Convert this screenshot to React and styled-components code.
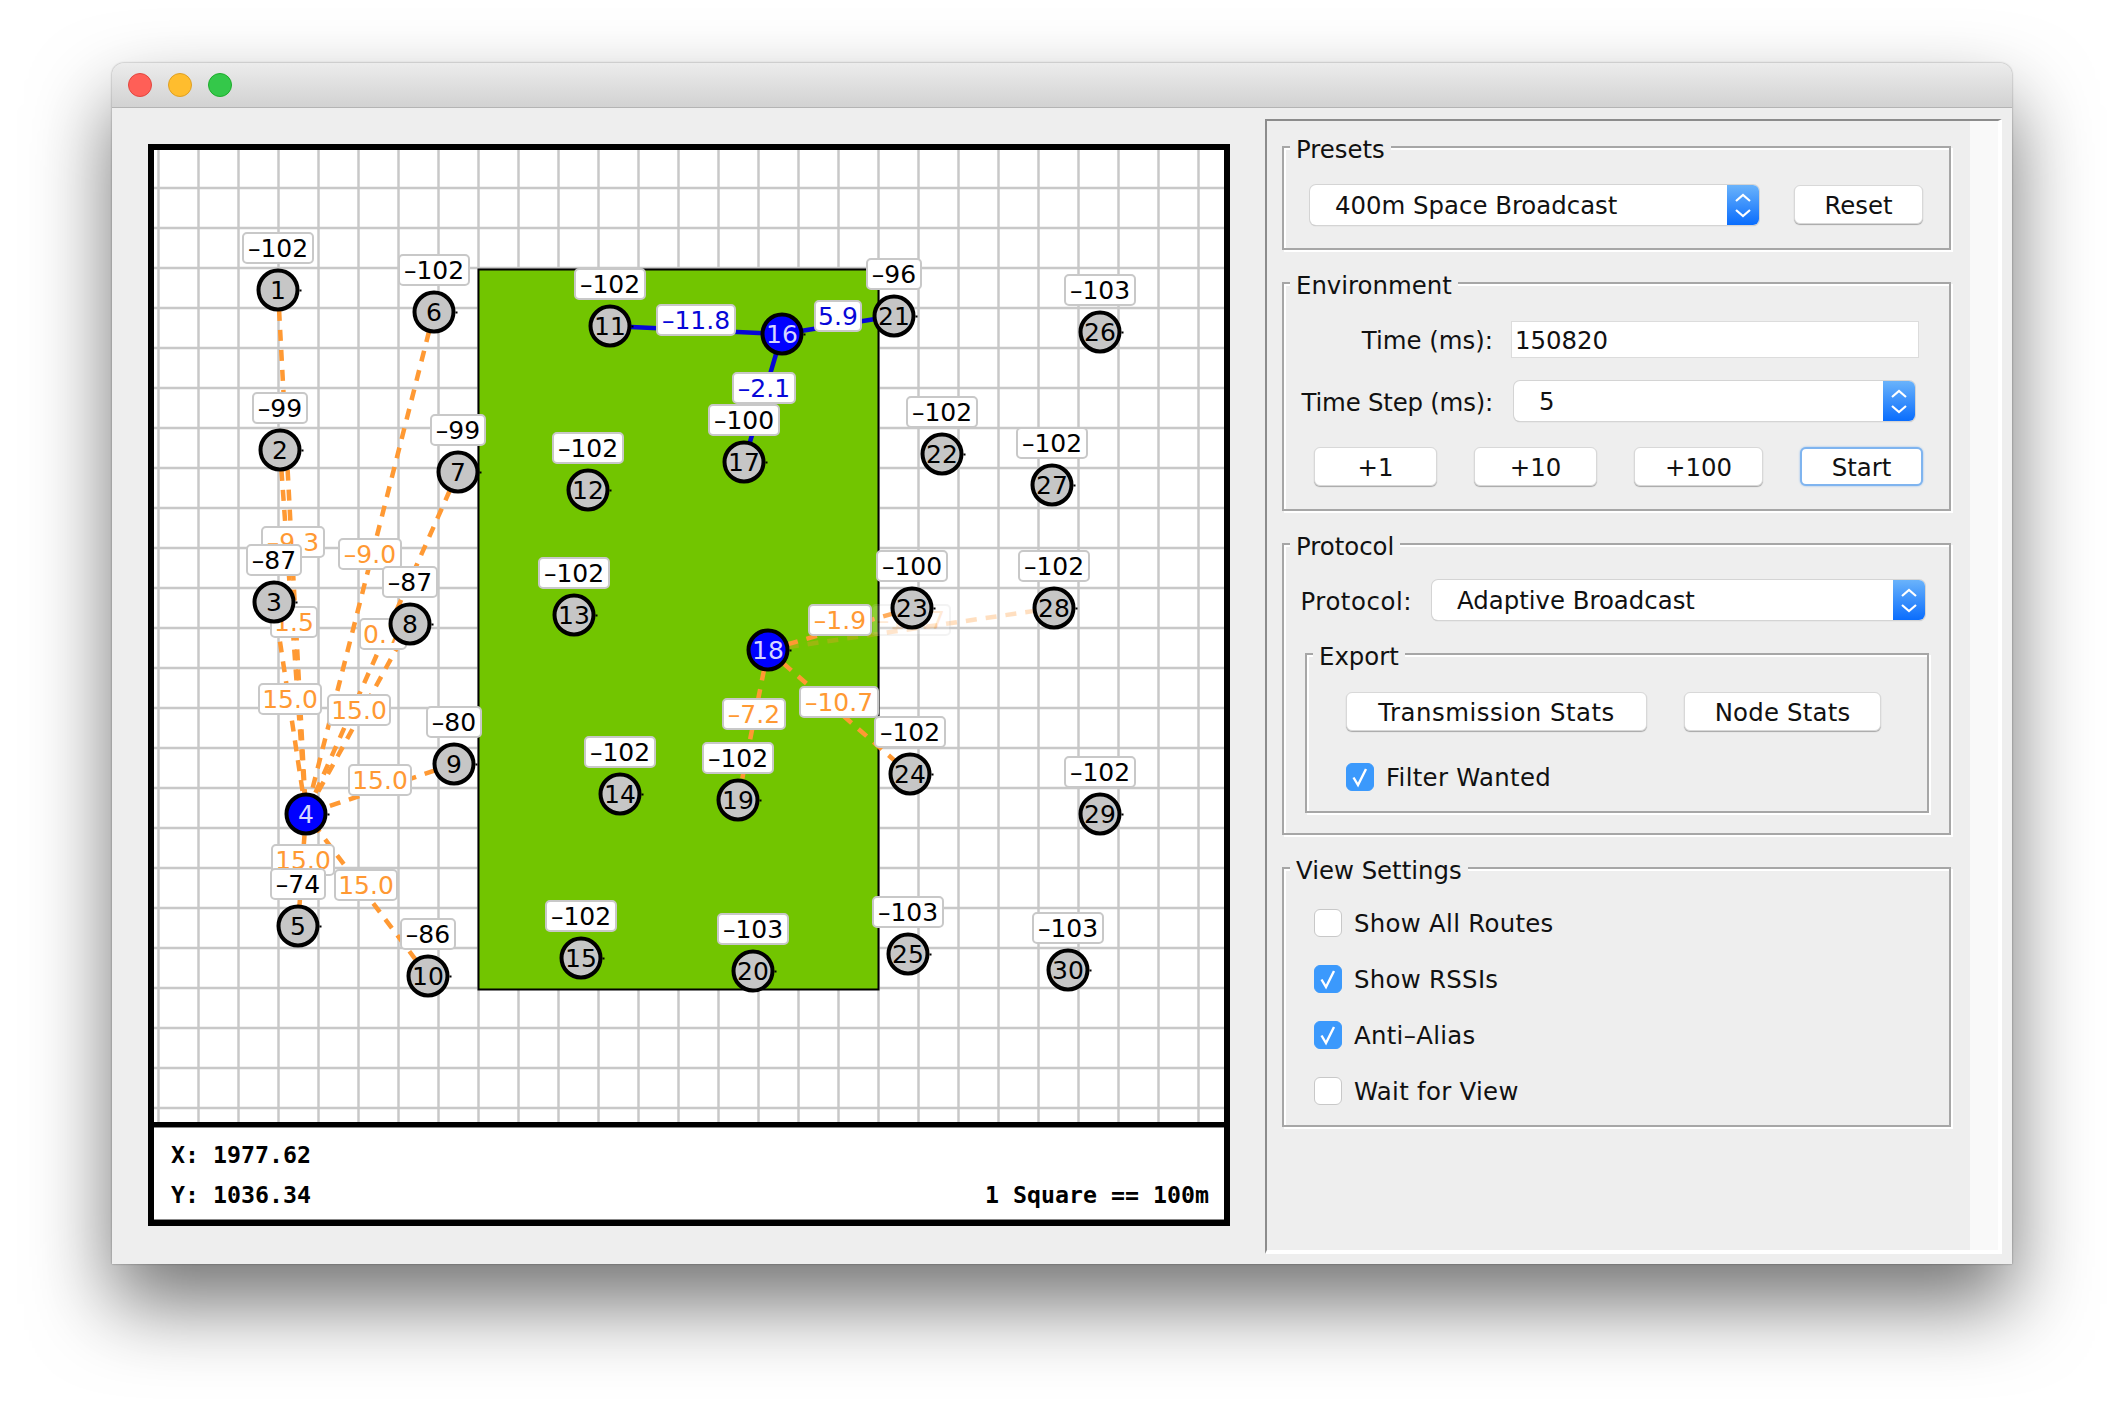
import React from "react";
import styled, { createGlobalStyle } from "styled-components";

const MAP_X = 154;
const MAP_Y = 150;

// [id, x, y, rssi] in page pixels, 4, 16 and 18 are the transmitting nodes
const NODES = [
  [1, 278, 290, "–102"],
  [2, 280, 450, "–99"],
  [3, 274, 602, "–87"],
  [4, 306, 814, null],
  [5, 298, 926, "–74"],
  [6, 434, 312, "–102"],
  [7, 458, 472, "–99"],
  [8, 410, 624, "–87"],
  [9, 454, 764, "–80"],
  [10, 428, 976, "–86"],
  [11, 610, 326, "–102"],
  [12, 588, 490, "–102"],
  [13, 574, 615, "–102"],
  [14, 620, 794, "–102"],
  [15, 581, 958, "–102"],
  [16, 782, 334, null],
  [17, 744, 462, "–100"],
  [18, 768, 650, null],
  [19, 738, 800, "–102"],
  [20, 753, 971, "–103"],
  [21, 894, 316, "–96"],
  [22, 942, 454, "–102"],
  [23, 912, 608, "–100"],
  [24, 910, 774, "–102"],
  [25, 908, 954, "–103"],
  [26, 1100, 332, "–103"],
  [27, 1052, 485, "–102"],
  [28, 1054, 608, "–102"],
  [29, 1100, 814, "–102"],
  [30, 1068, 970, "–103"],
];

const nodeById = Object.fromEntries(NODES.map(([id, x, y]) => [id, { x, y }]));

// [from, to, kind]
const EDGES = [
  [1, 4, "orange"], [2, 4, "orange"], [3, 4, "orange"], [5, 4, "orange"],
  [6, 4, "orange"], [7, 4, "orange"], [8, 4, "orange"], [9, 4, "orange"],
  [10, 4, "orange"],
  [16, 11, "blue"], [16, 21, "blue"], [16, 17, "blue"],
  [18, 19, "orange"], [18, 24, "orange"], [18, 23, "orange"], [18, 28, "faded"],
];

// [text, centre x, centre y, kind]
const EDGE_LABELS = [
  ["–9.3", 293, 542, "orange"],
  ["–9.0", 370, 554, "orange"],
  ["1.5", 294, 622, "orange"],
  ["0.7", 383, 634, "orange"],
  ["15.0", 290, 699, "orange"],
  ["15.0", 359, 710, "orange"],
  ["15.0", 380, 780, "orange"],
  ["15.0", 303, 860, "orange"],
  ["15.0", 366, 885, "orange"],
  ["–11.8", 696, 320, "blue"],
  ["5.9", 838, 316, "blue"],
  ["–2.1", 764, 388, "blue"],
  ["–11.7", 911, 620, "faded"],
  ["–1.9", 840, 620, "orange"],
  ["–10.7", 839, 702, "orange"],
  ["–7.2", 754, 714, "orange"],
];

const EDGE_COLORS = { orange: "#ff9933", blue: "#0707d8", faded: "#ff9933" };

const GlobalStyle = createGlobalStyle`
  html, body {
    margin: 0;
    background: #fff;
  }
  body {
    font-family: "DejaVu Sans", sans-serif;
    color: #111;
  }
`;

const Page = styled.div`
  width: 2124px;
  height: 1424px;
  padding: 63px 112px 0;
  box-sizing: border-box;
  overflow: hidden;
`;

const Window = styled.div`
  width: 1900px;
  height: 1201px;
  background: #eeeeee;
  border-radius: 12px 12px 0 0;
  box-shadow: 0 40px 80px rgba(0, 0, 0, 0.55), 0 0 2px rgba(0, 0, 0, 0.45);
`;

const TitleBar = styled.div`
  height: 44px;
  display: flex;
  align-items: center;
  gap: 16px;
  padding-left: 16px;
  background: linear-gradient(#ececec, #d2d2d2);
  border-bottom: 1px solid #b4b4b4;
  border-radius: 12px 12px 0 0;
`;

const Light = styled.span`
  width: 24px;
  height: 24px;
  box-sizing: border-box;
  border-radius: 50%;
  background: ${(p) => p.$fill};
  border: 1px solid ${(p) => p.$edge};
`;

const Content = styled.div`
  display: flex;
  align-items: flex-start;
  padding: 11px 10px 0 36px;
`;

const MapFrame = styled.div`
  width: 1082px;
  height: 1082px;
  margin-top: 25px;
  margin-right: 35px;
  flex: none;
  box-sizing: border-box;
  border: 6px solid #000;
  display: flex;
  flex-direction: column;
  background: #000;
`;

const MapArea = styled.div`
  position: relative;
  height: 972px;
  background: #fff;
  overflow: hidden;
  font-size: 25px;
  line-height: 1;
`;

const MapDrawing = styled.svg`
  position: absolute;
  inset: 0;
  display: block;
`;

const TagBase = styled.div`
  position: absolute;
  height: 32px;
  box-sizing: border-box;
  display: flex;
  align-items: center;
  justify-content: center;
  white-space: nowrap;
  background: #fff;
  border: 2px solid #c8c8c8;
  border-radius: 5px;
  transform: translate(-50%, -50%);
`;

const EdgeTag = styled(TagBase).attrs((p) => ({
  style: { left: p.$x, top: p.$y, width: p.$w },
}))`
  color: ${(p) => EDGE_COLORS[p.$kind]};
  opacity: ${(p) => (p.$kind === "faded" ? 0.2 : 1)};
`;

const RssiTag = styled(TagBase).attrs((p) => ({
  style: { left: p.$x, top: p.$y, width: p.$w },
}))`
  color: #000;
`;

const NodeDisc = styled.div.attrs((p) => ({
  style: { left: p.$x, top: p.$y },
}))`
  position: absolute;
  width: 43px;
  height: 43px;
  box-sizing: border-box;
  transform: translate(-50%, -50%);
  display: flex;
  align-items: center;
  justify-content: center;
  border-radius: 50%;
  border: 4.5px solid #000;
  background: ${(p) => (p.$active ? "#0000ff" : "#c6c6c6")};
  color: ${(p) => (p.$active ? "#d6d6ff" : "#000")};

  &::after {
    content: "";
    position: absolute;
    right: -5.5px;
    top: 50%;
    width: 2px;
    height: 2px;
    margin-top: -1px;
    background: #000;
  }
`;

const StatusBar = styled.div`
  margin-top: 5px;
  height: 93px;
  box-sizing: border-box;
  padding: 6px 15px 0 17px;
  background: #fff;
  border-top: 1px solid #888;
  border-bottom: 1px solid #888;
  font-family: "DejaVu Sans Mono", monospace;
  font-weight: 700;
  font-size: 23.25px;
  color: #000;
`;

const StatusRow = styled.div`
  height: 40px;
  display: flex;
  align-items: center;
  justify-content: space-between;
`;

const Panel = styled.div`
  width: 737px;
  height: 1135px;
  box-sizing: border-box;
  flex: none;
  display: flex;
  border-top: 2px solid #8c8c8c;
  border-left: 2px solid #8c8c8c;
  border-right: 4px solid #fff;
  border-bottom: 4px solid #fff;
  font-size: 24.4px;
`;

const PanelBody = styled.div`
  flex: 1;
  box-sizing: border-box;
  padding: 25px 19px 0 15px;
  display: flex;
  flex-direction: column;
  gap: 32px;
`;

const ScrollTrack = styled.div`
  width: 28px;
  background: #f9f9f9;
`;

const Group = styled.section`
  position: relative;
  box-sizing: border-box;
  border: 2px solid #a6a6a6;
  box-shadow: inset 2px 2px 0 #fff, 2px 2px 0 #fff;
  padding: ${(p) => p.$padding};
  ${(p) => p.$nested && "margin: 33px 0 0 21px; width: 624px;"}
`;

const GroupTitle = styled.div`
  position: absolute;
  left: 6px;
  top: -13px;
  padding: 0 6px;
  height: 28px;
  line-height: 30px;
  background: #eeeeee;
`;

const Row = styled.div`
  display: flex;
  align-items: flex-start;
  margin-top: ${(p) => p.$top || 0}px;
`;

const FieldLabel = styled.div`
  width: ${(p) => p.$width}px;
  flex: none;
  align-self: center;
  text-align: right;
  white-space: nowrap;
  padding-top: 2px;
  letter-spacing: ${(p) => p.$track || 0}px;
`;

const TextField = styled.div`
  margin-left: 18px;
  width: 408px;
  height: 37px;
  box-sizing: border-box;
  padding: 2px 0 0 3px;
  display: flex;
  align-items: center;
  background: #fff;
  border: 1px solid #dcdcdc;
`;

const ComboBox = styled.div`
  width: ${(p) => p.$width}px;
  height: 40px;
  margin-left: ${(p) => p.$left || 0}px;
  box-sizing: border-box;
  display: flex;
  align-items: center;
  justify-content: space-between;
  background: #fff;
  border-radius: 6px;
  box-shadow: 0 0 0 1px #d4d4d4, 0 1px 1px rgba(0, 0, 0, 0.3);
  padding-left: ${(p) => p.$inset}px;
  white-space: nowrap;
`;

const Stepper = styled.svg`
  width: 32px;
  height: 40px;
  flex: none;
  display: block;
  border-radius: 0 6px 6px 0;
  background: linear-gradient(#6ab3fb, #0a6dfd);
`;

const PushButton = styled.div`
  width: ${(p) => p.$width}px;
  height: 39px;
  margin-left: ${(p) => p.$left || 0}px;
  box-sizing: border-box;
  flex: none;
  display: flex;
  align-items: center;
  justify-content: center;
  padding-top: 1px;
  white-space: nowrap;
  letter-spacing: ${(p) => p.$track || 0}px;
  background: #fff;
  border-radius: 6px;
  border: ${(p) => (p.$focused ? "2px solid #7fb4ef" : "1px solid #d8d8d8")};
  box-shadow: ${(p) => (p.$focused ? "0 0 2px #7fb4ef" : "0 1px 1px rgba(0, 0, 0, 0.3)")};
`;

const CheckRow = styled.div`
  display: flex;
  align-items: center;
  gap: 12px;
  height: 28px;
  margin-left: ${(p) => p.$left || 0}px;
  margin-top: ${(p) => p.$top || 0}px;
  white-space: nowrap;
  letter-spacing: 0.3px;
`;

const CheckBox = styled.div`
  width: 28px;
  height: 28px;
  box-sizing: border-box;
  border-radius: 6px;
  background: ${(p) => (p.$checked ? "#3b99fc" : "#fff")};
  border: 1px solid ${(p) => (p.$checked ? "#3b99fc" : "#c8c8c8")};
`;

const Tick = styled.svg`
  display: block;
  width: 26px;
  height: 26px;
`;

function ComboArrows() {
  return (
    <Stepper viewBox="0 0 32 40">
      <path d="M9 16 L16 10 L23 16 M9 25 L16 31 L23 25" fill="none" stroke="#fff" strokeWidth="2.2" />
    </Stepper>
  );
}

function Check({ checked, label, left, top }) {
  return (
    <CheckRow $left={left} $top={top}>
      <CheckBox $checked={checked}>
        {checked && (
          <Tick viewBox="0 0 26 26">
            <path d="M6.5 13.5 L11 21 L19 5" fill="none" stroke="#fff" strokeWidth="2.4" />
          </Tick>
        )}
      </CheckBox>
      {label}
    </CheckRow>
  );
}

function MapView() {
  const verticals = Array.from({ length: 27 }, (_, i) => 4.5 + i * 40);
  const horizontals = Array.from({ length: 24 }, (_, i) => 38 + i * 40);

  return (
    <MapArea>
      <MapDrawing width="1070" height="972">
        {verticals.map((x) => (
          <line key={x} x1={x} x2={x} y1="0" y2="972" stroke="#c8c8c8" strokeWidth="2.5" />
        ))}
        {horizontals.map((y) => (
          <line key={y} x1="0" x2="1070" y1={y} y2={y} stroke="#c8c8c8" strokeWidth="2.5" />
        ))}
        <rect x="324.5" y="119.5" width="400" height="720" fill="#72c500" stroke="#000" strokeWidth="2" />
        {EDGES.map(([from, to, kind]) => (
          <line
            key={`${from}-${to}`}
            x1={nodeById[from].x - MAP_X}
            y1={nodeById[from].y - MAP_Y}
            x2={nodeById[to].x - MAP_X}
            y2={nodeById[to].y - MAP_Y}
            stroke={EDGE_COLORS[kind]}
            strokeWidth="4.5"
            strokeDasharray={kind === "blue" ? undefined : "11 9"}
            opacity={kind === "faded" ? 0.3 : 1}
          />
        ))}
      </MapDrawing>

      {EDGE_LABELS.map(([text, x, y, kind]) => (
        <EdgeTag key={`${text}-${x}`} $x={x - MAP_X} $y={y - MAP_Y} $w={text.length * 16} $kind={kind}>
          {text}
        </EdgeTag>
      ))}

      {NODES.map(([id, x, y, rssi]) =>
        rssi ? (
          <RssiTag key={id} $x={x - MAP_X} $y={y - 42 - MAP_Y} $w={rssi.length * 16 + 8}>
            {rssi}
          </RssiTag>
        ) : null
      )}

      {NODES.map(([id, x, y, rssi]) => (
        <NodeDisc key={id} $x={x - MAP_X} $y={y - MAP_Y} $active={!rssi}>
          {id}
        </NodeDisc>
      ))}
    </MapArea>
  );
}

export default function App() {
  return (
    <Page>
      <GlobalStyle />
      <Window>
        <TitleBar>
          <Light $fill="#ff5f57" $edge="#e2463f" />
          <Light $fill="#ffbd2e" $edge="#dfa023" />
          <Light $fill="#34c84a" $edge="#1dad2b" />
        </TitleBar>
        <Content>
          <MapFrame>
            <MapView />
            <StatusBar>
              <StatusRow>X: 1977.62</StatusRow>
              <StatusRow>
                <span>Y: 1036.34</span>
                <span>1 Square == 100m</span>
              </StatusRow>
            </StatusBar>
          </MapFrame>

          <Panel>
            <PanelBody>
              <Group $padding="37px 0 23px 26px">
                <GroupTitle>Presets</GroupTitle>
                <Row>
                  <ComboBox $width={449} $inset={25}>
                    400m Space Broadcast
                    <ComboArrows />
                  </ComboBox>
                  <PushButton $width={129} $left={35}>Reset</PushButton>
                </Row>
              </Group>

              <Group $padding="37px 0 23px 0">
                <GroupTitle>Environment</GroupTitle>
                <Row>
                  <FieldLabel $width={209}>Time (ms):</FieldLabel>
                  <TextField>150820</TextField>
                </Row>
                <Row $top={23}>
                  <FieldLabel $width={209} $track={-0.2}>Time Step (ms):</FieldLabel>
                  <ComboBox $width={401} $left={21} $inset={25}>
                    5
                    <ComboArrows />
                  </ComboBox>
                </Row>
                <Row $top={26}>
                  <PushButton $width={123} $left={30}>+1</PushButton>
                  <PushButton $width={123} $left={37}>+10</PushButton>
                  <PushButton $width={129} $left={37}>+100</PushButton>
                  <PushButton $width={123} $left={37} $focused>Start</PushButton>
                </Row>
              </Group>

              <Group $padding="35px 0 20px 0">
                <GroupTitle>Protocol</GroupTitle>
                <Row>
                  <FieldLabel $width={128} $track={0.55}>Protocol:</FieldLabel>
                  <ComboBox $width={493} $left={20} $inset={25}>
                    Adaptive Broadcast
                    <ComboArrows />
                  </ComboBox>
                </Row>
                <Group $nested $padding="37px 0 20px 39px">
                  <GroupTitle>Export</GroupTitle>
                  <Row>
                    <PushButton $width={301} $track={0.5}>Transmission Stats</PushButton>
                    <PushButton $width={197} $left={37} $track={0.2}>Node Stats</PushButton>
                  </Row>
                  <Check checked label="Filter Wanted" top={32} />
                </Group>
              </Group>

              <Group $padding="40px 0 20px 30px">
                <GroupTitle>View Settings</GroupTitle>
                <Check label="Show All Routes" />
                <Check checked label="Show RSSIs" top={28} />
                <Check checked label="Anti–Alias" top={28} />
                <Check label="Wait for View" top={28} />
              </Group>
            </PanelBody>
            <ScrollTrack />
          </Panel>
        </Content>
      </Window>
    </Page>
  );
}
